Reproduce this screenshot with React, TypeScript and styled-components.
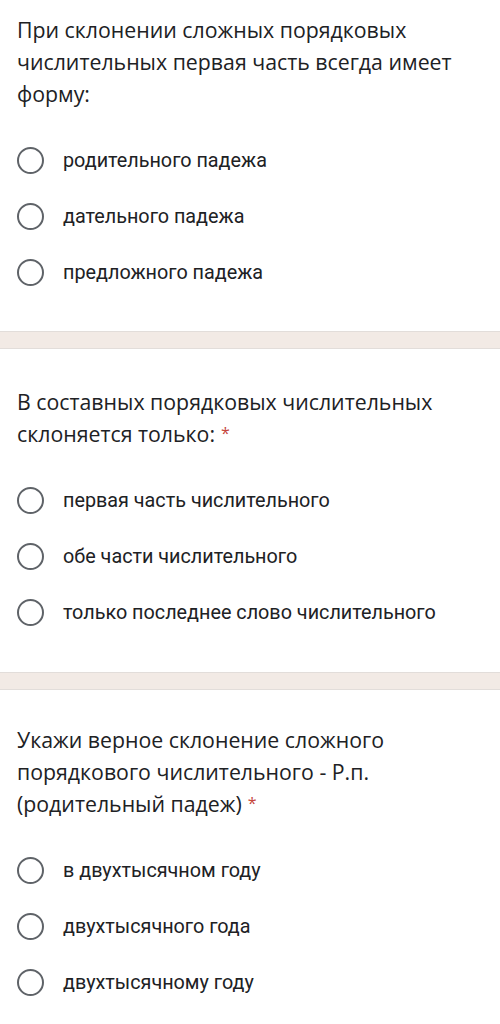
import React from "react";
import styled, { createGlobalStyle } from "styled-components";

const Global = createGlobalStyle`
  html, body { margin: 0; padding: 0; background: #ffffff; }
  * { box-sizing: border-box; }
`;

const Page = styled.div`
  width: 500px;
  display: flex;
  flex-direction: column;
  background: #ffffff;
`;

const Section = styled.section<{ $top: number; $bottom: number }>`
  display: flex;
  flex-direction: column;
  gap: 22px;
  padding: ${(p) => p.$top}px 17px ${(p) => p.$bottom}px 17px;
`;

const Title = styled.div`
  font-family: "Open Sans", "Noto Sans", sans-serif;
  font-size: 21.3px;
  line-height: 32px;
  color: #202124;
  letter-spacing: 0;
`;

const Star = styled.span`
  display: inline-block;
  color: #c5453c;
  margin-left: 6px;
  font-size: 16px;
  line-height: 16px;
  vertical-align: 3px;
`;

const Options = styled.div`
  display: flex;
  flex-direction: column;
`;

const Option = styled.label`
  height: 56px;
  display: flex;
  align-items: center;
  gap: 19px;
  font-family: Roboto, "Liberation Sans", sans-serif;
  font-size: 19.8px;
  color: #202124;
`;

const Radio = styled.span`
  width: 27px;
  height: 27px;
  border-radius: 50%;
  border: 2.5px solid #5f6368;
  flex: none;
`;

const Divider = styled.div`
  height: 18px;
  background: #f2eae5;
  border-top: 1px solid #e2ddda;
  border-bottom: 1px solid #e2ddda;
`;

type Q = { title: string; required: boolean; options: string[]; top: number; bottom: number };

const questions: Q[] = [
  {
    title: "При склонении сложных порядковых числительных первая часть всегда имеет форму:",
    required: false,
    options: ["родительного падежа", "дательного падежа", "предложного падежа"],
    top: 14,
    bottom: 31,
  },
  {
    title: "В составных порядковых числительных склоняется только:",
    required: true,
    options: ["первая часть числительного", "обе части числительного", "только последнее слово числительного"],
    top: 37,
    bottom: 32,
  },
  {
    title: "Укажи верное склонение сложного порядкового числительного - Р.п. (родительный падеж)",
    required: true,
    options: ["в двухтысячном году", "двухтысячного года", "двухтысячному году"],
    top: 34,
    bottom: 32,
  },
];

export default function App() {
  return (
    <Page>
      <Global />
      {questions.map((q, i) => (
        <React.Fragment key={i}>
          {i > 0 && <Divider />}
          <Section $top={q.top} $bottom={q.bottom}>
            <Title>
              {q.title}
              {q.required && <Star>*</Star>}
            </Title>
            <Options>
              {q.options.map((o) => (
                <Option key={o}>
                  <Radio />
                  {o}
                </Option>
              ))}
            </Options>
          </Section>
        </React.Fragment>
      ))}
    </Page>
  );
}
